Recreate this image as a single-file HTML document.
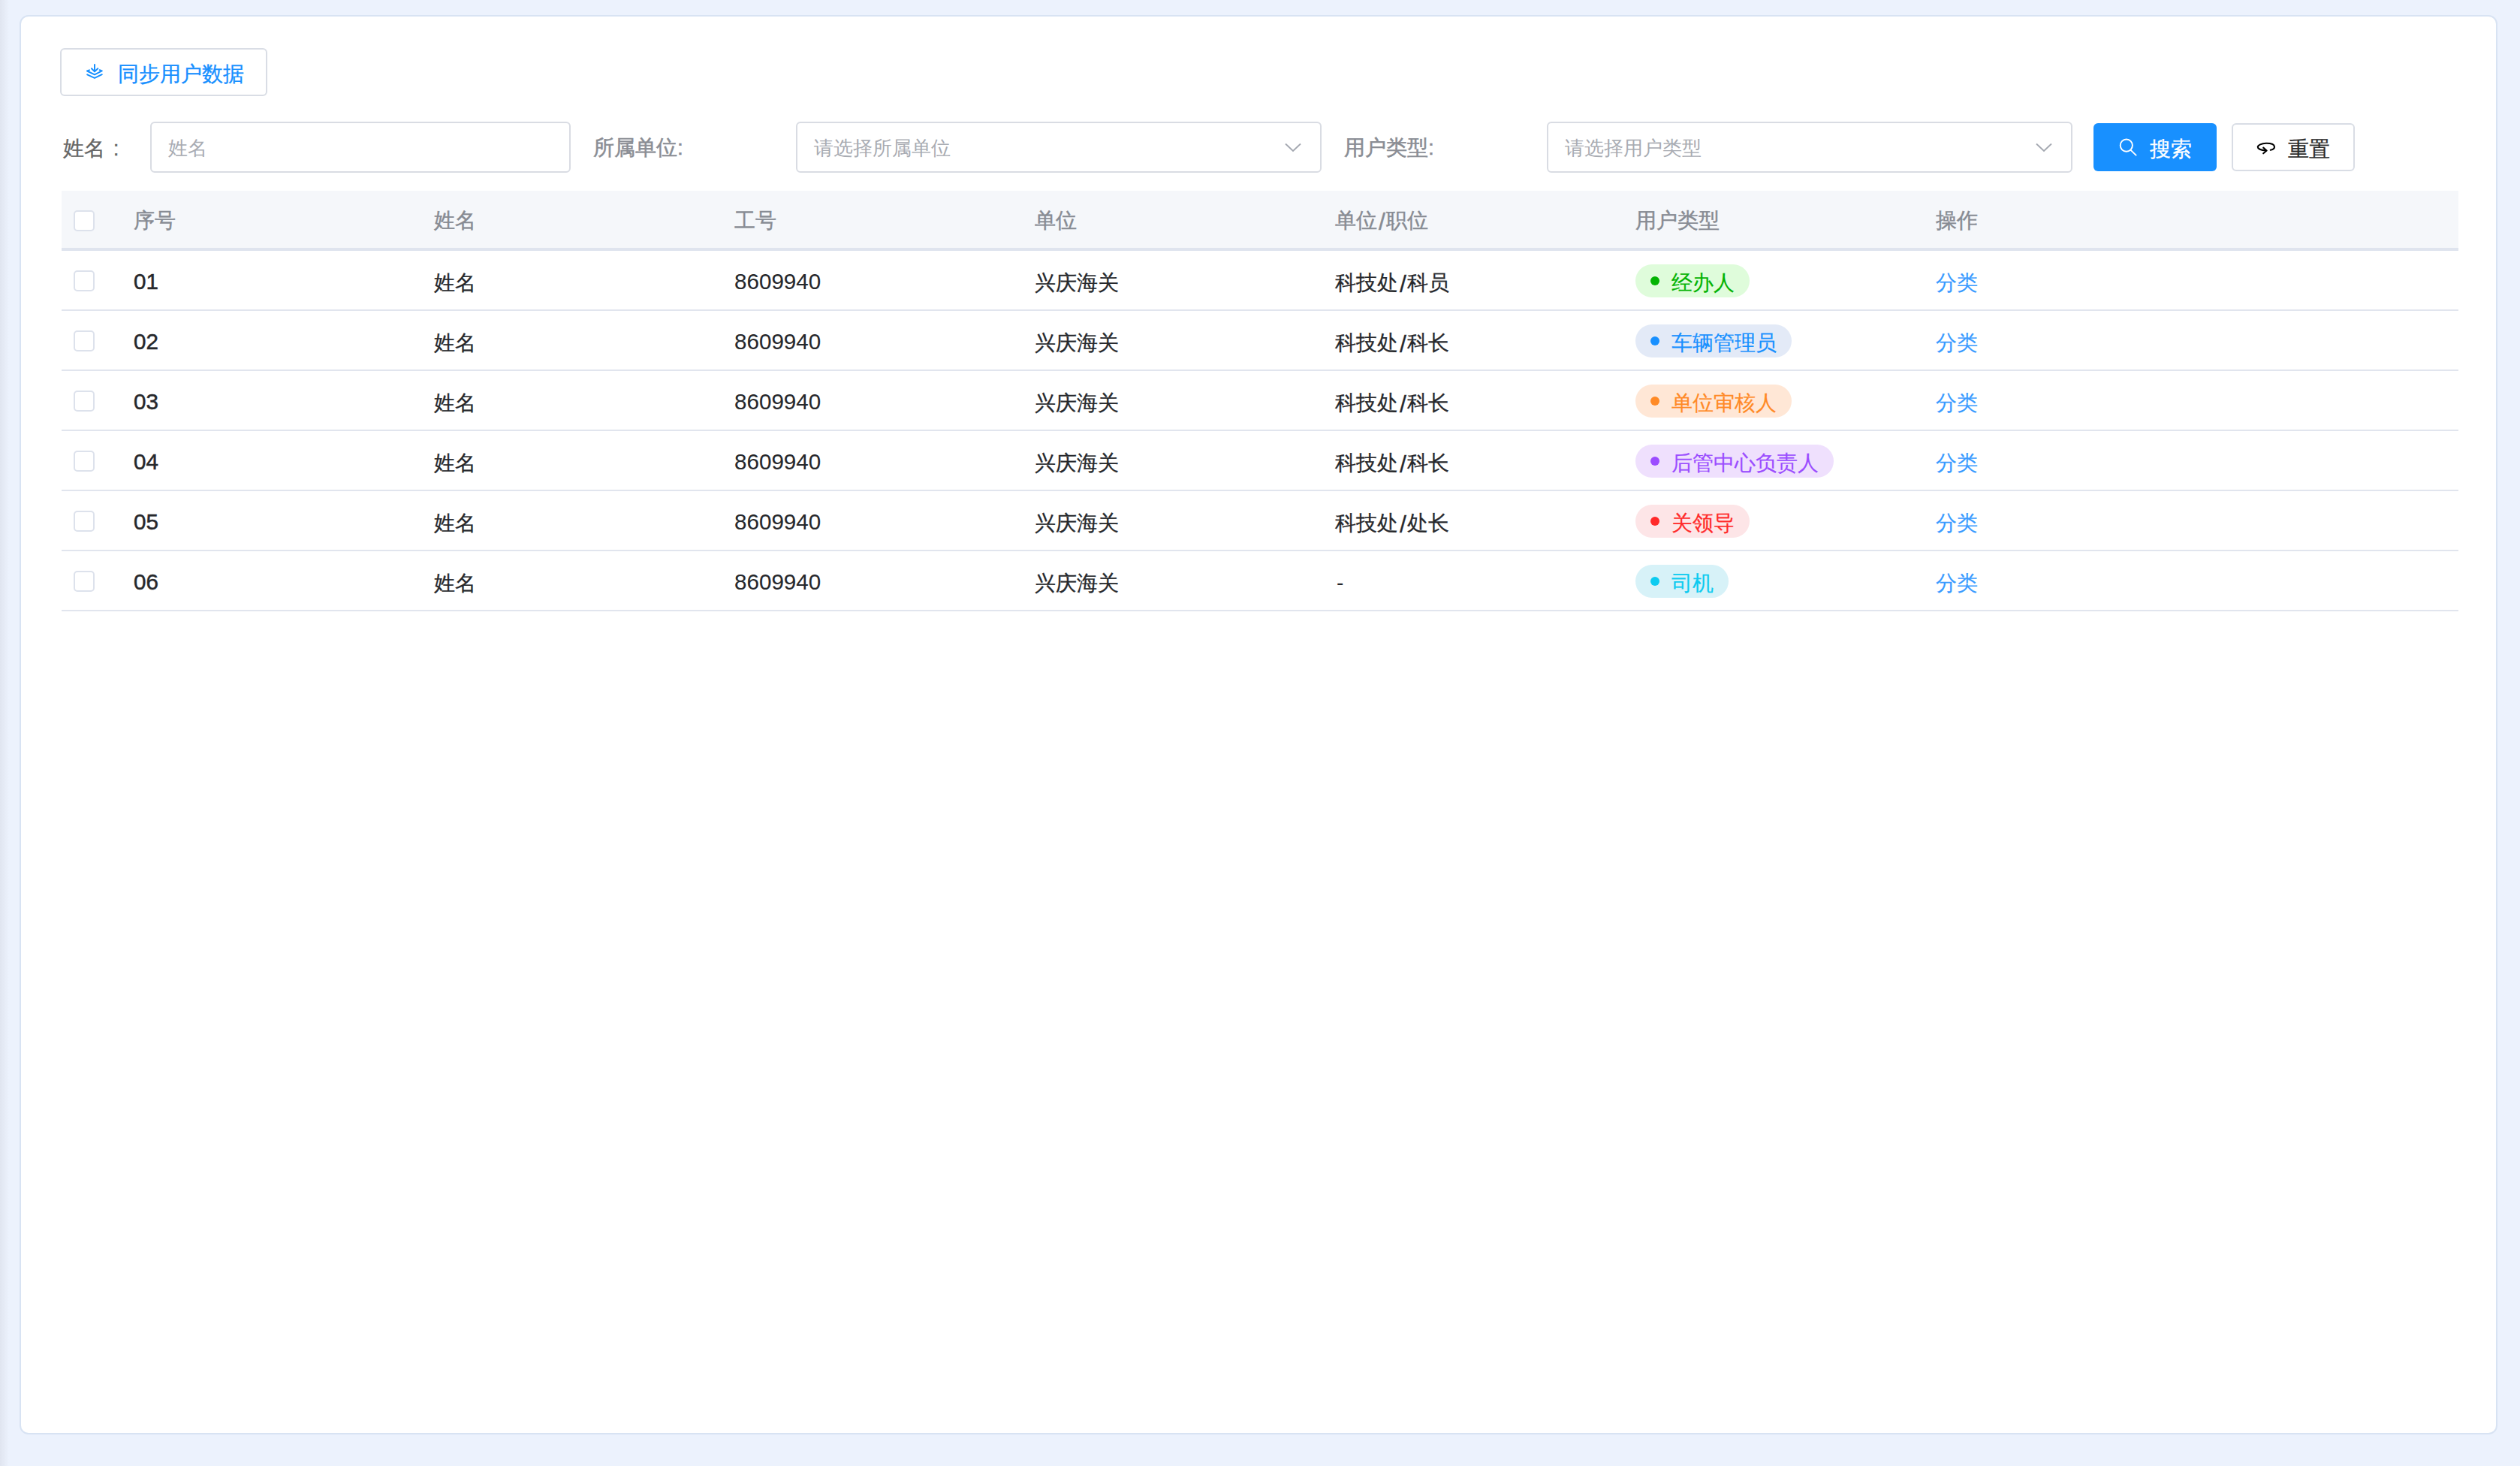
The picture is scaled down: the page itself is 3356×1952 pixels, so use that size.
<!DOCTYPE html>
<html><head><meta charset="utf-8">
<style>
*{box-sizing:border-box;margin:0;padding:0}
html,body{width:3356px;height:1952px;overflow:hidden}
body{position:relative;background:#ecf2fd;font-family:"Liberation Sans",sans-serif;color:#262626}
.shade{position:absolute;left:0;top:0;width:12px;height:1952px;background:linear-gradient(to right,#e0e5f0,#ecf2fd)}
.card{position:absolute;left:26px;top:20px;width:3300px;height:1890px;background:#fff;border:2px solid #d8e3f3;border-radius:12px}
.abs{position:absolute;white-space:nowrap}
.btn{position:absolute;border:2px solid #d9dde5;border-radius:6px;background:#fff}
.inp{position:absolute;border:2px solid #d9dce3;border-radius:6px;background:#fff;height:68px;top:162px}
.ph{position:absolute;font-size:26px;line-height:40px;color:#a8abb2;top:13px}
.lbl{position:absolute;font-size:28px;line-height:40px;top:175px}
.chev{position:absolute;top:190px}
.thead{position:absolute;left:82px;top:254px;width:3192px;height:80px;background:#f5f7fa;border-bottom:4px solid #dfe4ee}
.row{position:absolute;left:82px;width:3192px;height:80px;border-bottom:2px solid #e1e5ee}
.cb{position:absolute;left:16px;width:28px;height:28px;border:2px solid #dde2ec;border-radius:5px;background:#fff}
.th{position:absolute;font-size:28px;line-height:40px;color:#878b93;top:274px;-webkit-text-stroke:0.45px #878b93}
.td{position:absolute;font-size:28px;line-height:40px;color:#26282c;-webkit-text-stroke:0.3px #26282c}
.tag{position:absolute;left:2178px;height:44px;border-radius:22px;padding-left:20px}
.tag i{position:absolute;left:20px;top:16px;width:12px;height:12px;border-radius:6px}
.tag span{position:absolute;left:48px;top:5px;font-size:28px;line-height:40px;-webkit-text-stroke:0.2px currentColor}
.dg{font-size:29.6px;-webkit-text-stroke:0.1px #26282c}
.sl{font-size:32px;padding:0 1px 0 2px;line-height:1px;position:relative;top:3px}
.op{position:absolute;left:2578px;font-size:28px;line-height:40px;color:#3a9bff;-webkit-text-stroke:0.15px #3a9bff}
</style></head><body>
<div class="shade"></div>
<div class="card"></div>

<!-- sync button -->
<div class="btn" style="left:80px;top:64px;width:276px;height:64px"></div>
<svg class="abs" style="left:114px;top:84px" width="24" height="24" viewBox="0 0 24 24" fill="none" stroke="#1890ff" stroke-width="2" stroke-linejoin="round" stroke-linecap="round">
  <path d="M12 2 V11"/><path d="M8 7.3 L12 11.4 L16.3 7.3"/>
  <path d="M5 9.4 L2 10.5 L12 15.3 L21.8 10.4 L18.7 9.3"/>
  <path d="M2.2 15.3 L12 19.9 L21.8 15.2"/>
</svg>
<div class="abs" style="left:157px;top:79px;font-size:28px;line-height:40px;color:#1890ff;-webkit-text-stroke:0.3px #1890ff">同步用户数据</div>

<!-- filters -->
<div class="lbl abs" style="left:84px;top:178px;color:#666;-webkit-text-stroke:0.3px #666;word-spacing:3px">姓名 :</div>
<div class="inp" style="left:200px;width:560px"><div class="ph" style="left:22px">姓名</div></div>

<div class="lbl abs" style="left:790px;top:177px;color:#8a8d94;-webkit-text-stroke:0.55px #8a8d94">所属单位:</div>
<div class="inp" style="left:1060px;width:700px"><div class="ph" style="left:22px">请选择所属单位</div></div>
<svg class="chev" style="left:1710px" width="24" height="14" viewBox="0 0 24 14" fill="none" stroke="#a3a7b0" stroke-width="1.8"><path d="M2 1.5 L12 11 L22 1.5"/></svg>

<div class="lbl abs" style="left:1790px;top:177px;color:#8a8d94;-webkit-text-stroke:0.55px #8a8d94">用户类型:</div>
<div class="inp" style="left:2060px;width:700px"><div class="ph" style="left:22px">请选择用户类型</div></div>
<svg class="chev" style="left:2710px" width="24" height="14" viewBox="0 0 24 14" fill="none" stroke="#a3a7b0" stroke-width="1.8"><path d="M2 1.5 L12 11 L22 1.5"/></svg>

<div class="abs" style="left:2788px;top:164px;width:164px;height:64px;background:#1890ff;border-radius:6px"></div>
<svg class="abs" style="left:2820px;top:182px" width="28" height="28" viewBox="0 0 28 28" fill="none" stroke="#fff" stroke-width="1.9" stroke-linecap="round"><circle cx="11.8" cy="11.6" r="8.1"/><path d="M17.6 17.9 L24.6 24.6"/></svg>
<div class="abs" style="left:2863px;top:179px;font-size:28px;line-height:40px;color:#fff;-webkit-text-stroke:0.3px #fff">搜索</div>

<div class="btn" style="left:2972px;top:164px;width:164px;height:64px"></div>
<svg class="abs" style="left:3004px;top:186px" width="28" height="22" viewBox="0 0 28 22" fill="none" stroke="#000" stroke-width="2.1" stroke-linecap="round" stroke-linejoin="round"><path d="M19.8 13.7 C23 13 25.2 11.6 25 9.3 C24.6 6.2 19.3 4.7 13.8 4.8 C8 5 2.8 7.1 2.8 9.8 C2.8 12.4 8 14.2 14.4 14.5"/><path d="M10.2 10.6 L14.5 14.5 L10.2 18.3"/></svg>
<div class="abs" style="left:3047px;top:179px;font-size:28px;line-height:40px;color:#2b2b2b;-webkit-text-stroke:0.3px #2b2b2b">重置</div>

<!-- table -->
<div class="thead"><div class="cb" style="top:26px"></div></div>
<div class="th" style="left:178px">序号</div>
<div class="th" style="left:578px">姓名</div>
<div class="th" style="left:978px">工号</div>
<div class="th" style="left:1378px">单位</div>
<div class="th" style="left:1778px">单位<span class="sl">/</span>职位</div>
<div class="th" style="left:2178px">用户类型</div>
<div class="th" style="left:2578px">操作</div>

<div class="row" style="top:334px"><div class="cb" style="top:26px"></div></div>
<div class="td dg" style="left:178px;top:355px;-webkit-text-stroke:0.5px #26282c">01</div>
<div class="td" style="left:578px;top:357px">姓名</div>
<div class="td dg" style="left:978px;top:355px">8609940</div>
<div class="td" style="left:1378px;top:357px">兴庆海关</div>
<div class="td" style="left:1778px;top:357px">科技处<span class="sl">/</span>科员</div>
<div class="tag" style="top:352px;width:152px;background:#dffcdb"><i style="background:#03b303"></i><span style="color:#03b303">经办人</span></div>
<div class="op" style="top:357px">分类</div>
<div class="row" style="top:414px"><div class="cb" style="top:26px"></div></div>
<div class="td dg" style="left:178px;top:435px;-webkit-text-stroke:0.5px #26282c">02</div>
<div class="td" style="left:578px;top:437px">姓名</div>
<div class="td dg" style="left:978px;top:435px">8609940</div>
<div class="td" style="left:1378px;top:437px">兴庆海关</div>
<div class="td" style="left:1778px;top:437px">科技处<span class="sl">/</span>科长</div>
<div class="tag" style="top:432px;width:208px;background:#e3eaf7"><i style="background:#1890ff"></i><span style="color:#1890ff">车辆管理员</span></div>
<div class="op" style="top:437px">分类</div>
<div class="row" style="top:494px"><div class="cb" style="top:26px"></div></div>
<div class="td dg" style="left:178px;top:515px;-webkit-text-stroke:0.5px #26282c">03</div>
<div class="td" style="left:578px;top:517px">姓名</div>
<div class="td dg" style="left:978px;top:515px">8609940</div>
<div class="td" style="left:1378px;top:517px">兴庆海关</div>
<div class="td" style="left:1778px;top:517px">科技处<span class="sl">/</span>科长</div>
<div class="tag" style="top:512px;width:208px;background:#ffe7d6"><i style="background:#ff8a26"></i><span style="color:#ff8a26">单位审核人</span></div>
<div class="op" style="top:517px">分类</div>
<div class="row" style="top:574px"><div class="cb" style="top:26px"></div></div>
<div class="td dg" style="left:178px;top:595px;-webkit-text-stroke:0.5px #26282c">04</div>
<div class="td" style="left:578px;top:597px">姓名</div>
<div class="td dg" style="left:978px;top:595px">8609940</div>
<div class="td" style="left:1378px;top:597px">兴庆海关</div>
<div class="td" style="left:1778px;top:597px">科技处<span class="sl">/</span>科长</div>
<div class="tag" style="top:592px;width:264px;background:#efe0fd"><i style="background:#9b4dff"></i><span style="color:#9b4dff">后管中心负责人</span></div>
<div class="op" style="top:597px">分类</div>
<div class="row" style="top:654px"><div class="cb" style="top:26px"></div></div>
<div class="td dg" style="left:178px;top:675px;-webkit-text-stroke:0.5px #26282c">05</div>
<div class="td" style="left:578px;top:677px">姓名</div>
<div class="td dg" style="left:978px;top:675px">8609940</div>
<div class="td" style="left:1378px;top:677px">兴庆海关</div>
<div class="td" style="left:1778px;top:677px">科技处<span class="sl">/</span>处长</div>
<div class="tag" style="top:672px;width:152px;background:#fde5e7"><i style="background:#ff2a2a"></i><span style="color:#ff2a2a">关领导</span></div>
<div class="op" style="top:677px">分类</div>
<div class="row" style="top:734px"><div class="cb" style="top:26px"></div></div>
<div class="td dg" style="left:178px;top:755px;-webkit-text-stroke:0.5px #26282c">06</div>
<div class="td" style="left:578px;top:757px">姓名</div>
<div class="td dg" style="left:978px;top:755px">8609940</div>
<div class="td" style="left:1378px;top:757px">兴庆海关</div>
<div class="td" style="left:1780px;top:756px;-webkit-text-stroke:0">-</div>
<div class="tag" style="top:752px;width:124px;background:#d7f2f8"><i style="background:#0ccbf0"></i><span style="color:#0ccbf0">司机</span></div>
<div class="op" style="top:757px">分类</div>
</body></html>
